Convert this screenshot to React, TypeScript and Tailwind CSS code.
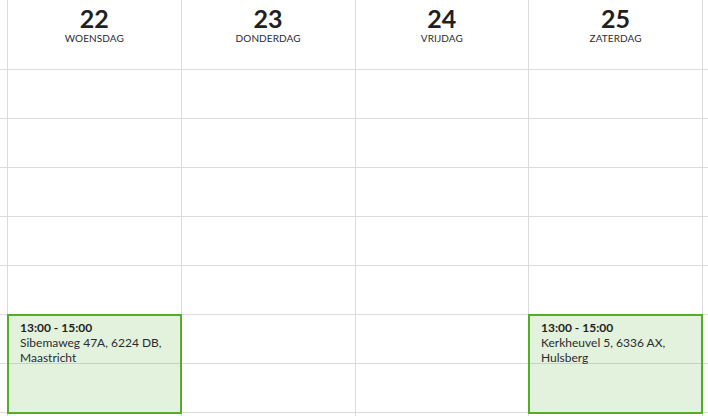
import React from 'react';

const days = [
  { num: '22', label: 'WOENSDAG' },
  { num: '23', label: 'DONDERDAG' },
  { num: '24', label: 'VRIJDAG' },
  { num: '25', label: 'ZATERDAG' },
];

const events = [
  { left: 'left-[7px]', time: '13:00 - 15:00', lines: ['Sibemaweg 47A, 6224 DB,', 'Maastricht'] },
  { left: 'left-[528px]', time: '13:00 - 15:00', lines: ['Kerkheuvel 5, 6336 AX,', 'Hulsberg'] },
];

const rows = [0, 1, 2, 3, 4, 5, 6, 7];

const Column = ({ day, edge }: { day?: { num: string; label: string }; edge?: 'left' | 'right' }) => (
  <div
    className={
      edge === 'left'
        ? 'w-[7px] shrink-0 flex flex-col'
        : edge === 'right'
        ? 'w-[6px] shrink-0 flex flex-col border-l border-[#dcdcdc]'
        : 'flex-1 min-w-0 flex flex-col border-l border-[#dcdcdc]'
    }
  >
    <div className="h-[70px] shrink-0 border-b border-[#dcdcdc] flex flex-col items-center pt-[4px]">
      {day && (
        <>
          <span className="text-[25px] leading-[28px] font-bold text-[#1f1f24]">{day.num}</span>
          <span className="text-[10px] leading-[12px] text-[#2b2b30] tracking-[0.01em]">{day.label}</span>
        </>
      )}
    </div>
    {rows.map((r) => (
      <div key={r} className="h-[49px] shrink-0 border-b border-[#dcdcdc]" />
    ))}
  </div>
);

export default function App() {
  return (
    <div
      className="relative w-[708px] h-[416px] overflow-hidden bg-white"
      style={{ fontFamily: 'Lato, "Open Sans", sans-serif' }}
    >
      <div className="flex h-full">
        <Column edge="left" />
        {days.map((d) => (
          <Column key={d.num} day={d} />
        ))}
        <Column edge="right" />
      </div>

      {events.map((e, i) => (
        <div
          key={i}
          className={`absolute ${e.left} top-[314px] w-[175px] h-[100px] border-2 border-[#53ad27] bg-[rgba(82,172,38,0.16)] pl-[11px] pt-[4px] text-[#2b2b33]`}
        >
          <div className="text-[12px] leading-[15px] font-bold text-[#1f1f24]">{e.time}</div>
          {e.lines.map((l) => (
            <div key={l} className="text-[12px] leading-[15px]">{l}</div>
          ))}
        </div>
      ))}
    </div>
  );
}
